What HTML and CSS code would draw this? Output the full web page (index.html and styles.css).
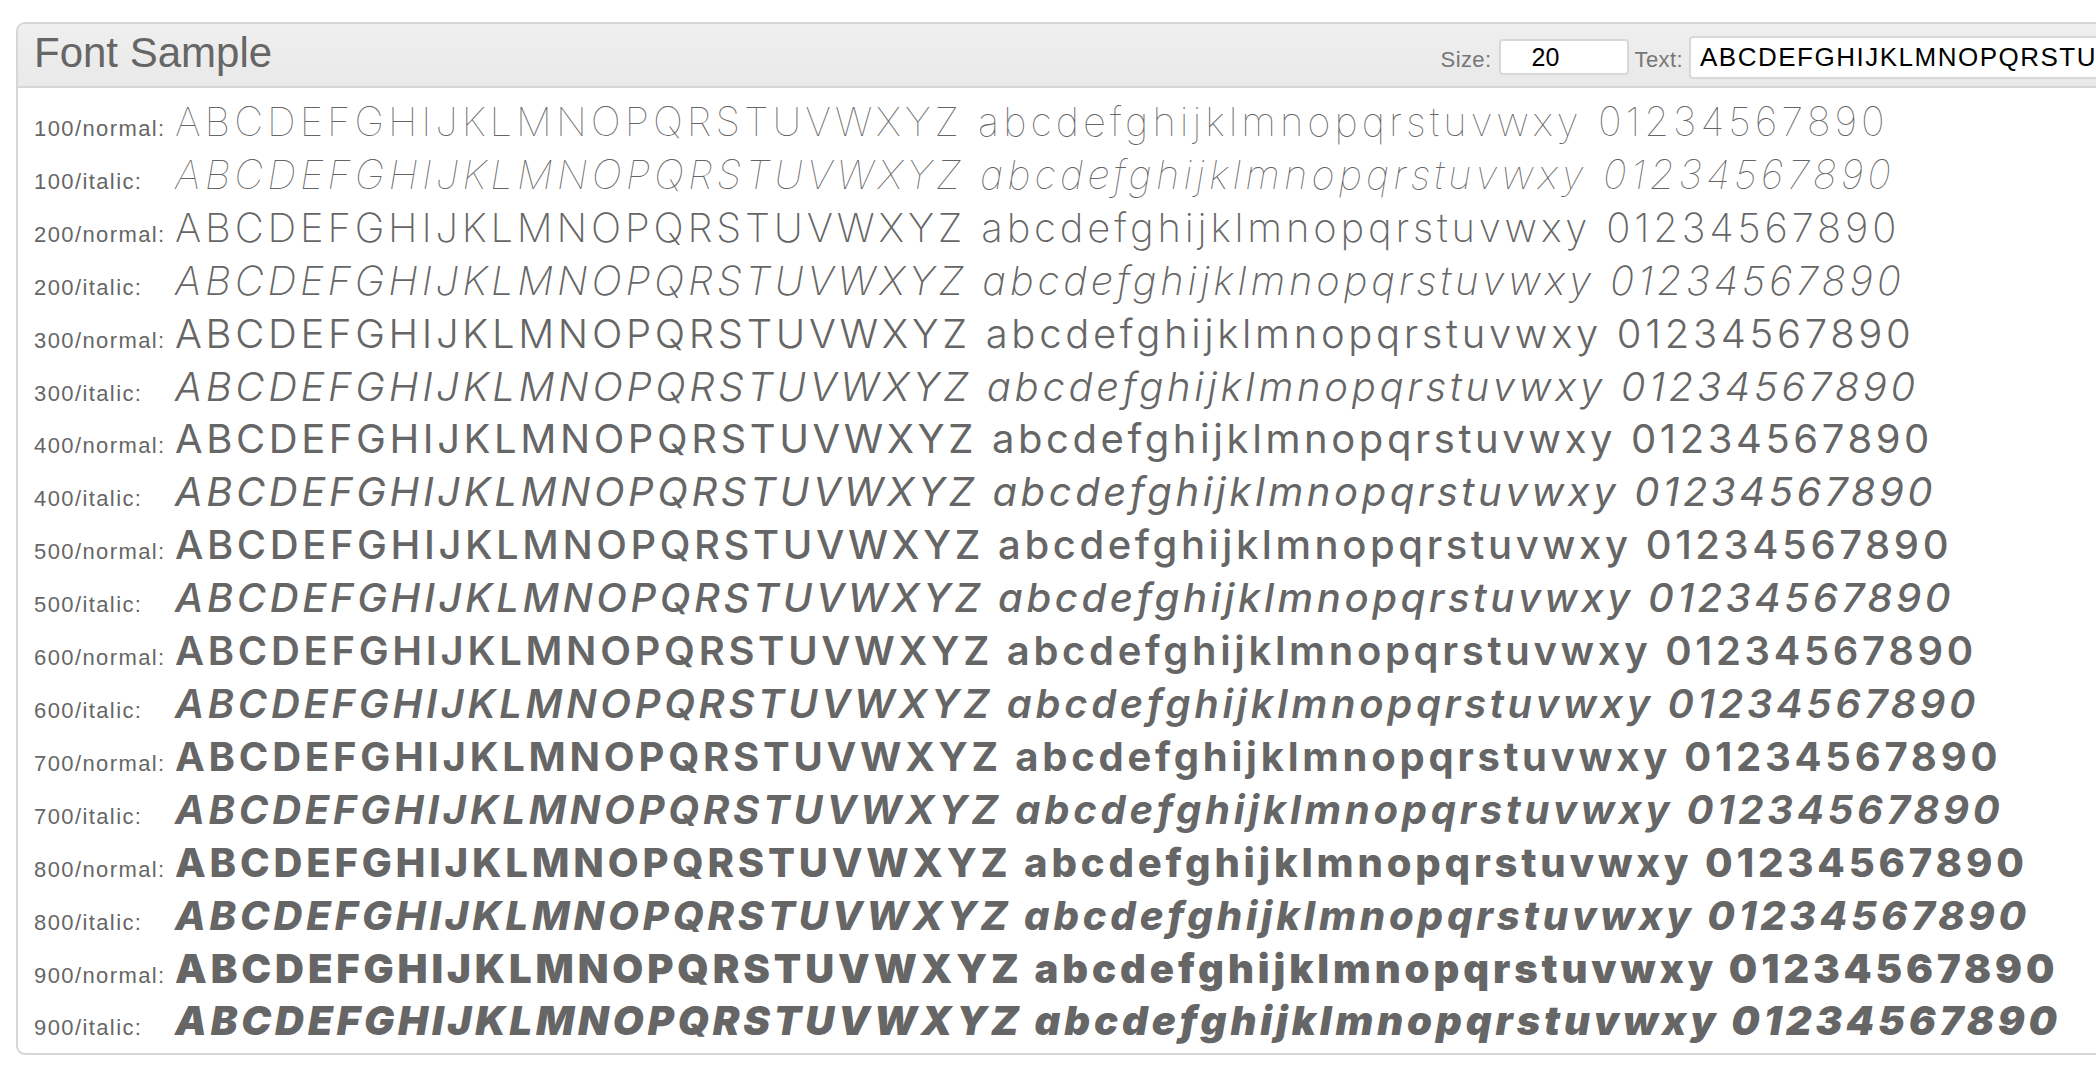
FILE: index.html
```html
<!DOCTYPE html>
<html>
  <head>
    <meta charset="UTF-8">
    <link rel="stylesheet" href="styles.css">
  </head>
  <body>
    <div class="panel">
      <div class="panel-head">
        <h1>Font Sample</h1>
        <div class="controls">
          <label for="size">Size:</label>
          <input id="size" class="size-input" type="text" value="20">
          <label for="text">Text:</label>
          <input id="text" class="text-input" type="text" value="ABCDEFGHIJKLMNOPQRSTUVWXYZ abcdefghijklmnopqrstuvwxy 01234567890">
        </div>
      </div>

      <div class="samples">
        <div class="row"><span class="label">100/normal:</span><span class="sample w100">ABCDEFGHIJKLMNOPQRSTUVWXYZ abcdefghijklmnopqrstuvwxy 01234567890</span></div>
        <div class="row"><span class="label">100/italic:</span><span class="sample w100 italic">ABCDEFGHIJKLMNOPQRSTUVWXYZ abcdefghijklmnopqrstuvwxy 01234567890</span></div>
        <div class="row"><span class="label">200/normal:</span><span class="sample w200">ABCDEFGHIJKLMNOPQRSTUVWXYZ abcdefghijklmnopqrstuvwxy 01234567890</span></div>
        <div class="row"><span class="label">200/italic:</span><span class="sample w200 italic">ABCDEFGHIJKLMNOPQRSTUVWXYZ abcdefghijklmnopqrstuvwxy 01234567890</span></div>
        <div class="row"><span class="label">300/normal:</span><span class="sample w300">ABCDEFGHIJKLMNOPQRSTUVWXYZ abcdefghijklmnopqrstuvwxy 01234567890</span></div>
        <div class="row"><span class="label">300/italic:</span><span class="sample w300 italic">ABCDEFGHIJKLMNOPQRSTUVWXYZ abcdefghijklmnopqrstuvwxy 01234567890</span></div>
        <div class="row"><span class="label">400/normal:</span><span class="sample w400">ABCDEFGHIJKLMNOPQRSTUVWXYZ abcdefghijklmnopqrstuvwxy 01234567890</span></div>
        <div class="row"><span class="label">400/italic:</span><span class="sample w400 italic">ABCDEFGHIJKLMNOPQRSTUVWXYZ abcdefghijklmnopqrstuvwxy 01234567890</span></div>
        <div class="row"><span class="label">500/normal:</span><span class="sample w500">ABCDEFGHIJKLMNOPQRSTUVWXYZ abcdefghijklmnopqrstuvwxy 01234567890</span></div>
        <div class="row"><span class="label">500/italic:</span><span class="sample w500 italic">ABCDEFGHIJKLMNOPQRSTUVWXYZ abcdefghijklmnopqrstuvwxy 01234567890</span></div>
        <div class="row"><span class="label">600/normal:</span><span class="sample w600">ABCDEFGHIJKLMNOPQRSTUVWXYZ abcdefghijklmnopqrstuvwxy 01234567890</span></div>
        <div class="row"><span class="label">600/italic:</span><span class="sample w600 italic">ABCDEFGHIJKLMNOPQRSTUVWXYZ abcdefghijklmnopqrstuvwxy 01234567890</span></div>
        <div class="row"><span class="label">700/normal:</span><span class="sample w700">ABCDEFGHIJKLMNOPQRSTUVWXYZ abcdefghijklmnopqrstuvwxy 01234567890</span></div>
        <div class="row"><span class="label">700/italic:</span><span class="sample w700 italic">ABCDEFGHIJKLMNOPQRSTUVWXYZ abcdefghijklmnopqrstuvwxy 01234567890</span></div>
        <div class="row"><span class="label">800/normal:</span><span class="sample w800">ABCDEFGHIJKLMNOPQRSTUVWXYZ abcdefghijklmnopqrstuvwxy 01234567890</span></div>
        <div class="row"><span class="label">800/italic:</span><span class="sample w800 italic">ABCDEFGHIJKLMNOPQRSTUVWXYZ abcdefghijklmnopqrstuvwxy 01234567890</span></div>
        <div class="row"><span class="label">900/normal:</span><span class="sample w900">ABCDEFGHIJKLMNOPQRSTUVWXYZ abcdefghijklmnopqrstuvwxy 01234567890</span></div>
        <div class="row"><span class="label">900/italic:</span><span class="sample w900 italic">ABCDEFGHIJKLMNOPQRSTUVWXYZ abcdefghijklmnopqrstuvwxy 01234567890</span></div>
      </div>
    </div>
  </body>
</html>
```
FILE: styles.css
```css
html, body {
  margin: 0;
  overflow: hidden;
}
body {
  background: #fff;
  font-family: "Liberation Sans", Arial, sans-serif;
  color: #666;
}

.panel {
  box-sizing: border-box;
  width: 2220px;
  margin: 22px 0 0 16px;
  border: 2px solid #d6d6d6;
  border-radius: 9px;
  overflow: hidden;
}

.panel-head {
  display: flex;
  align-items: center;
  height: 62px;
  padding: 0 16px;
  background: linear-gradient(#efefef, #e9e9e9);
  border-bottom: 2px solid #d6d6d6;
}
.panel-head h1 {
  margin: 0 0 5px 0;
  font-size: 42px;
  font-weight: normal;
  line-height: 1;
  color: #666;
}

.controls {
  display: flex;
  align-items: center;
  margin-left: auto;
  margin-top: 4px;
}
.controls label {
  font-size: 22px;
  letter-spacing: 0.4px;
  color: #777;
  margin-top: 6px;
}
.controls input {
  box-sizing: border-box;
  border: 2px solid #d8d8d8;
  border-radius: 4px;
  background: #fff;
  color: #000;
  font-family: "Liberation Sans", Arial, sans-serif;
  outline: none;
}
.size-input {
  width: 130px;
  height: 36px;
  margin: 0 6px 0 7px;
  padding: 0 0 0 31px;
  font-size: 25px;
}
.text-input {
  width: 529px;
  height: 43px;
  margin-left: 6px;
  padding: 0 0 0 9px;
  font-size: 26px;
  letter-spacing: 1.5px;
}

.samples {
  padding: 8px 16px 5px 16px;
}
.row {
  white-space: nowrap;
  font-family: Inter, sans-serif;
  font-size: 40px;
  line-height: 52.9px;
}
.label {
  display: inline-block;
  width: 141px;
  font-family: "Liberation Sans", Arial, sans-serif;
  font-size: 22px;
  line-height: 22px;
  letter-spacing: 1.4px;
  color: #666;
}
.sample {
  color: #666;
}
.italic { font-style: italic; }

.w100 { font-weight: 100; letter-spacing: 4.01px; }
.w200 { font-weight: 200; letter-spacing: 3.82px; }
.w300 { font-weight: 300; letter-spacing: 3.67px; }
.w400 { font-weight: 400; letter-spacing: 3.59px; }
.w500 { font-weight: 500; letter-spacing: 3.59px; }
.w600 { font-weight: 600; letter-spacing: 3.68px; }
.w700 { font-weight: 700; letter-spacing: 3.76px; }
.w800 { font-weight: 800; letter-spacing: 3.81px; }
.w900 { font-weight: 900; letter-spacing: 3.89px; }
.w100.italic { letter-spacing: 4.08px; }
.w200.italic { letter-spacing: 3.86px; }
.w300.italic { letter-spacing: 3.71px; }
.w400.italic { letter-spacing: 3.61px; }
```
